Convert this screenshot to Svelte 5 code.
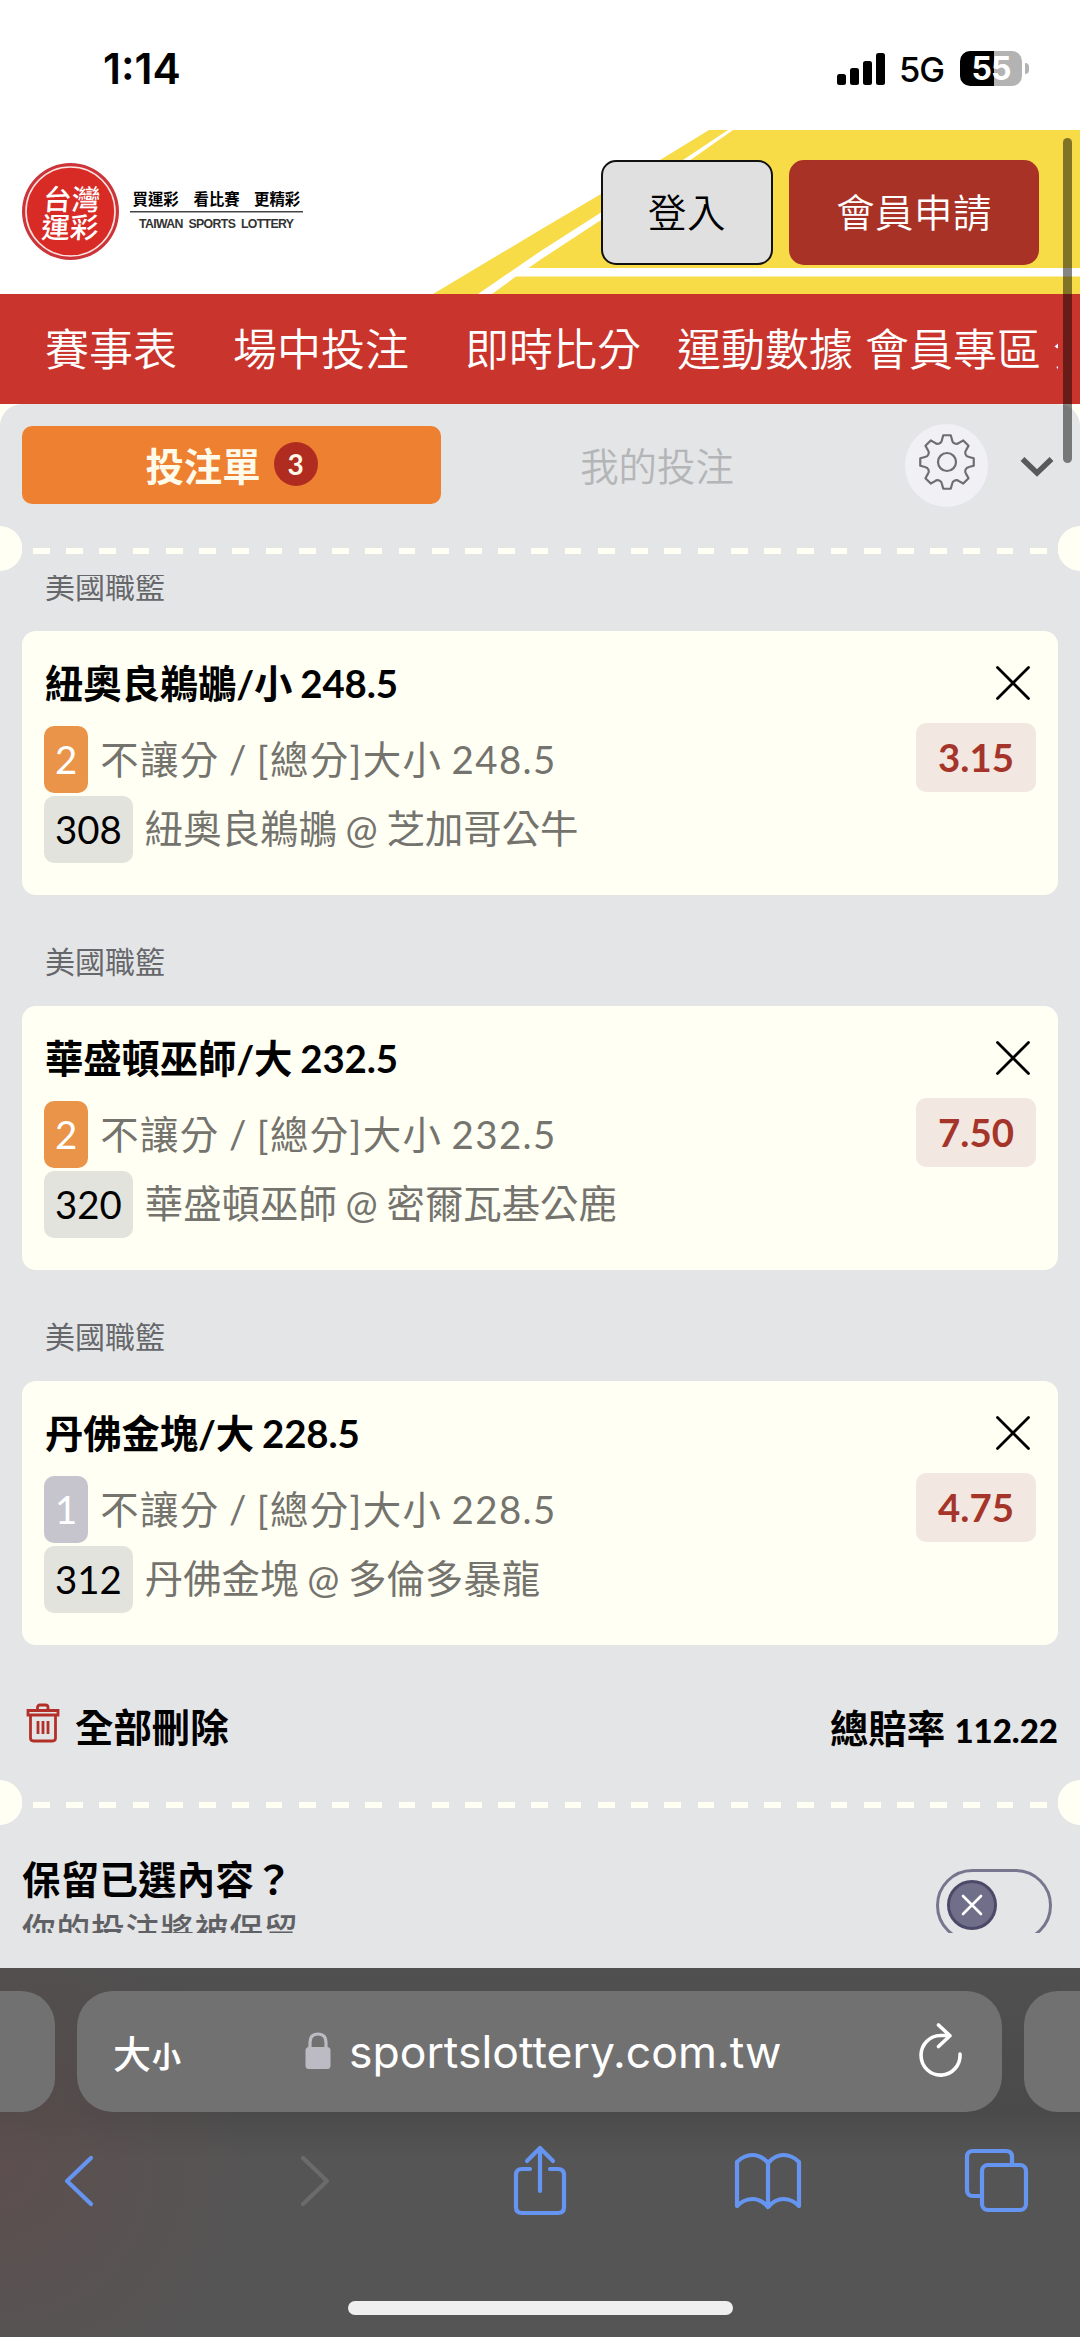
<script>
  const navItems = ['賽事表', '場中投注', '即時比分', '運動數據', '會員專區', '分析'];

  let bets = [
    { id: 308, league: '美國職籃', pick: '紐奧良鵜鶘/小 248.5', legs: 2, market: '不讓分 / [總分]大小 248.5', match: '紐奧良鵜鶘 @ 芝加哥公牛', odds: '3.15' },
    { id: 320, league: '美國職籃', pick: '華盛頓巫師/大 232.5', legs: 2, market: '不讓分 / [總分]大小 232.5', match: '華盛頓巫師 @ 密爾瓦基公鹿', odds: '7.50' },
    { id: 312, league: '美國職籃', pick: '丹佛金塊/大 228.5', legs: 1, market: '不讓分 / [總分]大小 228.5', match: '丹佛金塊 @ 多倫多暴龍', odds: '4.75' }
  ];

  function polar(r, deg) {
    const t = (deg * Math.PI) / 180;
    return `${(r * Math.cos(t)).toFixed(2)} ${(r * Math.sin(t)).toFixed(2)}`;
  }

  // Eight-tooth cog outline around 0,0
  function gearPath() {
    let d = `M${polar(27, -8)}`;
    for (let a = 0; a < 360; a += 45) {
      d += `L${polar(27, a + 8)}L${polar(22.5, a + 13)}`;
      d += `C${polar(19.5, a + 16)} ${polar(19.5, a + 29)} ${polar(22.5, a + 32)}L${polar(27, a + 37)}`;
    }
    return d + 'Z';
  }

  function removeBet(id) {
    bets = bets.filter(b => b.id !== id);
  }
</script>

<div class="screen">
  <div class="status">
    <span class="time">1:14</span>
    <div class="status-right">
      <svg width="48" height="32" viewBox="0 0 48 32">
        <rect x="0" y="21" width="9" height="11" rx="2.5" />
        <rect x="13" y="15" width="9" height="17" rx="2.5" />
        <rect x="26" y="8" width="9" height="24" rx="2.5" />
        <rect x="39" y="0" width="9" height="32" rx="2.5" />
      </svg>
      <span class="network">5G</span>
      <div class="battery">55</div>
      <div class="battery-tip"></div>
    </div>
  </div>

  <header class="header">
    <svg class="court" width="660" height="164" viewBox="420 130 660 164">
      <path d="M433 294L540 230L601 194L660 160L709 130H1080V294Z" fill="#f7dc48" />
      <path d="M478 294L540 251.5L601 212.5L683 160L728 130H733L690.5 160L601 220L540 260L528.5 268H1080V276.5H516L492 294Z" fill="#fff" />
    </svg>
    <svg class="logo" width="290" height="100" viewBox="20 161 290 100">
      <circle cx="70.5" cy="211.5" r="48.5" fill="#cc3439" />
      <circle cx="70.5" cy="211.5" r="44.5" fill="#d92b26" stroke="#fbe3df" stroke-width="1.6" />
      <g class="seal" transform="translate(70.5 211.5) skewX(-4)">
        <text x="-28" y="-1.5">台</text>
        <text x="0.5" y="-1.5">灣</text>
        <text x="-28" y="26.5">運</text>
        <text x="0.5" y="26.5">彩</text>
      </g>
      <g class="slogan">
        <text x="132.5" y="205">買運彩</text>
        <text x="193.5" y="205">看比賽</text>
        <text x="254" y="205">更精彩</text>
      </g>
      <path d="M130 211.8H303" stroke="#444" stroke-width="1.4" />
      <text class="english" x="139" y="227.5" textLength="155">TAIWAN SPORTS LOTTERY</text>
    </svg>
    <button class="btn login">登入</button>
    <button class="btn join">會員申請</button>
  </header>

  <nav class="nav">
    <div class="nav-list">
      {#each navItems as item}
        <span class="nav-item">{item}</span>
      {/each}
    </div>
  </nav>

  <main class="slip">
    <div class="slip-top">
      <div class="tabs">
        <button class="tab active">投注單 <span class="count">3</span></button>
        <button class="tab">我的投注</button>
        <button class="gear" aria-label="settings">
          <svg width="60" height="60" viewBox="-30 -30 60 60">
            <path d={gearPath()} />
            <circle r="9" />
          </svg>
        </button>
        <svg class="chevron" width="36" height="24" viewBox="0 0 36 24">
          <path d="M3.5 5L18 19L32.5 5" />
        </svg>
      </div>
      <div class="perforation"></div>
    </div>

    <div class="slip-body">
      {#each bets as bet (bet.id)}
        <section class="bet">
          <div class="league">{bet.league}</div>
          <div class="card">
            <div class="row title">
              <span>{bet.pick}</span>
              <button class="close" aria-label="remove" on:click={() => removeBet(bet.id)}>
                <svg width="36" height="36" viewBox="0 0 36 36">
                  <path d="M2.5 2.5L33.5 33.5M33.5 2.5L2.5 33.5" />
                </svg>
              </button>
            </div>
            <div class="row market">
              <span class="badge legs" class:single={bet.legs === 1}>{bet.legs}</span>
              <span class="market-name">{bet.market}</span>
              <span class="odds">{bet.odds}</span>
            </div>
            <div class="row match">
              <span class="badge code">{bet.id}</span>
              <span class="match-name">{bet.match}</span>
            </div>
          </div>
        </section>
      {/each}

      <div class="totals">
        <svg width="34" height="40" viewBox="0 0 34 40">
          <path d="M11.5 7V4.5Q11.5 2 14 2H19.5Q22 2 22 4.5V7M2 7.5H32V12H2ZM4.5 12V35Q4.5 38 7.5 38H26.5Q29.5 38 29.5 35V12M12 18V31M17 18V31M22 18V31" />
        </svg>
        <span class="clear">全部刪除</span>
        <span class="total">總賠率 <b>112.22</b></span>
      </div>

      <div class="perforation"></div>

      <div class="keep">
        <div>
          <div class="keep-title">保留已選內容？</div>
          <div class="keep-note">你的投注將被保留</div>
        </div>
        <div class="toggle">
          <div class="knob">
            <svg width="22" height="22" viewBox="0 0 22 22"><path d="M2 2L20 20M20 2L2 20" /></svg>
          </div>
        </div>
      </div>
    </div>
  </main>

  <footer class="browser">
    <div class="address-row">
      <div class="pill edge-left"></div>
      <div class="pill address">
        <span class="text-size">大<small>小</small></span>
        <svg class="lock" width="26" height="38" viewBox="0 0 26 38">
          <rect x="0.5" y="15" width="25" height="22" rx="3.5" fill="#bcbbc3" />
          <path d="M5 17V10.5Q5 2 13 2T21 10.5V17" fill="none" stroke="#bcbbc3" stroke-width="3.2" />
        </svg>
        <span class="url">sportslottery.com.tw</span>
        <svg class="reload" width="46" height="56" viewBox="0 0 46 56">
          <path d="M42 32A19.5 19.8 0 1 1 22.5 13.500H31M20.500 3L32 13.800L20.500 24.500" />
        </svg>
      </div>
      <div class="pill edge-right"></div>
    </div>
    <div class="toolbar">
      <svg width="34" height="56" viewBox="0 0 34 56"><path d="M29 5L5 28L29 51" /></svg>
      <svg class="disabled" width="34" height="56" viewBox="0 0 34 56"><path d="M5 5L29 28L5 51" /></svg>
      <svg width="56" height="72" viewBox="0 0 56 72">
        <path d="M18 24H10Q4 24 4 30V62Q4 68 10 68H46Q52 68 52 62V30Q52 24 46 24H38M28 46V4M15 16L28 3L41 16" />
      </svg>
      <svg width="68" height="58" viewBox="0 0 68 58">
        <path d="M34 11Q27 3 18.5 3Q10 3 3 10V54Q10 47 18.5 47Q27 47 34 55Q41 47 49.5 47Q58 47 65 54V10Q58 3 49.5 3Q41 3 34 11V55" />
      </svg>
      <svg width="66" height="66" viewBox="0 0 66 66">
        <path d="M17 48H9Q3 48 3 42V9Q3 3 9 3H42Q48 3 48 9V16" />
        <rect x="18" y="17" width="44" height="45" rx="6" />
      </svg>
    </div>
    <div class="home-bar"></div>
  </footer>

  <div class="scrollbar"></div>
</div>

<style>
  :global(body) {
    margin: 0;
    background: #fff;
  }

  .screen {
    position: relative;
    width: 1080px;
    height: 2337px;
    overflow: hidden;
    font-family: Lato, "Noto Sans CJK TC", sans-serif;
    font-size: 38.4px;
    color: #000;
  }

  button {
    border: none;
    padding: 0;
    margin: 0;
    background: none;
    font: inherit;
    color: inherit;
  }

  svg {
    display: block;
    flex: none;
  }

  /* Status bar */
  .status {
    display: flex;
    justify-content: space-between;
    height: 130px;
    box-sizing: border-box;
    padding: 44px 51px 0 103px;
    font-family: Inter, sans-serif;
  }

  .time {
    font-size: 42.5px;
    font-weight: 600;
    line-height: 50px;
  }

  .status-right {
    display: flex;
    align-items: center;
    height: 49px;
  }

  .network {
    width: 61px;
    padding: 2px 0 0 14px;
    box-sizing: border-box;
    margin-right: 14px;
    font-size: 34.5px;
    font-weight: 500;
    letter-spacing: -1px;
    line-height: 49px;
  }

  .battery {
    width: 62px;
    height: 35px;
    border-radius: 10px;
    background: linear-gradient(90deg, #000 34px, #b3b3b3 34px);
    color: #fff;
    font-size: 32px;
    font-weight: 700;
    line-height: 35px;
    text-align: center;
    letter-spacing: -1px;
  }

  .battery-tip {
    width: 4px;
    height: 11px;
    margin-left: 3px;
    border-radius: 0 4px 4px 0;
    background: #b3b3b3;
  }

  /* Header */
  .header {
    position: relative;
    display: flex;
    height: 164px;
    box-sizing: border-box;
    padding: 30px 41px 0 20px;
  }

  .court {
    position: absolute;
    right: 0;
    top: 0;
  }

  .logo {
    position: relative;
    margin: 1px auto 0 0;
  }

  .seal {
    font-size: 28.5px;
    font-weight: 500;
    fill: #fff;
  }

  .slogan {
    font-size: 15.4px;
    font-weight: 700;
  }

  .english {
    font-family: "Liberation Sans", sans-serif;
    font-size: 12.3px;
    font-weight: 700;
    fill: #333;
    word-spacing: 3px;
  }

  .btn {
    position: relative;
    box-sizing: border-box;
    height: 105px;
    border-radius: 15px;
    line-height: 101px;
    font-weight: 350;
    letter-spacing: 0.5px;
  }

  .login {
    width: 172px;
    margin-right: 16px;
    border: 2px solid #111;
    background: #e0e0e0;
  }

  .join {
    width: 250px;
    background: #a93226;
    color: #fff;
  }

  .nav {
    height: 110px;
    box-sizing: border-box;
    padding: 0 22px 0 45px;
    background: #c9352c;
    color: #fff;
  }

  .nav-list {
    display: flex;
    overflow: hidden;
    line-height: 110px;
    font-size: 44px;
    font-weight: 350;
    white-space: nowrap;
  }

  .nav-item {
    flex: none;
    margin-right: 12px;
  }

  .nav-item:nth-child(1),
  .nav-item:nth-child(2) {
    margin-right: 56px;
  }

  .nav-item:nth-child(3) {
    margin-right: 36px;
  }

  /* Bet slip */
  .slip {
    height: 1564px;
    background: linear-gradient(#fffff4 60px, #e4e5e7 60px);
  }

  .slip-top {
    height: 171px;
    box-sizing: border-box;
    padding-top: 19px;
    border-radius: 22px 22px 0 0;
    background: #e4e5e7;
  }

  .tabs {
    display: flex;
    align-items: center;
    height: 84px;
    padding: 0 24px 0 22px;
  }

  .tab {
    display: flex;
    align-items: center;
    justify-content: center;
    width: 432px;
    height: 78px;
    padding-bottom: 2px;
    box-sizing: border-box;
    color: #b4b5b7;
    font-weight: 350;
  }

  .tab.active {
    width: 419px;
    border-radius: 10px;
    background: #ee8031;
    color: #fffbea;
    font-weight: 700;
  }

  .count {
    width: 44px;
    height: 44px;
    margin-left: 13px;
    border-radius: 50%;
    background: #b12c20;
    font-size: 28px;
    line-height: 44px;
  }

  .gear {
    display: flex;
    align-items: center;
    justify-content: center;
    width: 83px;
    height: 83px;
    margin-left: 32px;
    padding-bottom: 6px;
    box-sizing: border-box;
    border-radius: 50%;
    background: #f1f1f5;
  }

  .gear svg {
    fill: none;
    stroke: #6d6e71;
    stroke-width: 2.2;
    stroke-linejoin: round;
  }

  .chevron {
    margin-left: 31px;
    margin-top: 2px;
    fill: none;
    stroke: #58595b;
    stroke-width: 5.5;
  }

  .perforation {
    height: 45px;
    margin-top: 19px;
    background:
      radial-gradient(circle at 0 50%, #fffff4 22px, transparent 22.6px),
      radial-gradient(circle at 100% 50%, #fffff4 22px, transparent 22.6px),
      repeating-linear-gradient(90deg, #fffff4 0 16.8px, transparent 16.8px 33.23px) 33px 22px / 1014px 6px no-repeat;
  }

  .slip-body {
    height: 1358px;
    overflow: hidden;
    background: #e4e5e7;
  }

  .bet:first-child {
    margin-top: -55px;
  }

  .league {
    height: 111px;
    box-sizing: border-box;
    padding: 44px 44px 0 45px;
    font-size: 30px;
    line-height: 44px;
    color: #66676a;
  }

  .card {
    height: 264px;
    box-sizing: border-box;
    margin: 0 22px;
    padding: 17px 22px 0;
    border-radius: 14px;
    background: #fffff4;
  }

  .row {
    display: flex;
    align-items: center;
    height: 70px;
    white-space: pre;
  }

  .title {
    font-weight: 700;
    justify-content: space-between;
    word-spacing: -1px;
    letter-spacing: -0.15px;
  }

  .title span {
    padding: 0 0 5px 1px;
  }

  .close {
    margin-right: 5px;
  }

  .close svg {
    fill: none;
    stroke: #000;
    stroke-width: 2.8;
    stroke-linecap: round;
  }

  .market,
  .match {
    color: #74736d;
    font-weight: 400;
  }

  .badge {
    box-sizing: border-box;
    height: 67px;
    padding: 0 11px;
    margin-right: 12px;
    border-radius: 10px;
    line-height: 67px;
  }

  .legs {
    background: #ea9449;
    color: #fff;
  }

  .single {
    background: #c6c5ce;
  }

  .code {
    background: #e3e3de;
    color: #000;
  }

  .market {
    height: 72px;
    margin-top: 5px;
  }

  .match {
    height: 66px;
    margin-top: 1px;
  }

  .market-name {
    padding-bottom: 5px;
    letter-spacing: 1.4px;
    word-spacing: -2px;
  }

  .match-name {
    padding-bottom: 6px;
    word-spacing: -1px;
  }

  .odds {
    width: 120px;
    height: 69px;
    margin: 0 0 4px auto;
    border-radius: 10px;
    background: #f3e7e1;
    color: #a5352a;
    font-weight: 700;
    line-height: 69px;
    text-align: center;
  }

  .totals {
    display: flex;
    align-items: center;
    height: 116px;
    padding: 14px 22px 0 26px;
    box-sizing: border-box;
    margin-top: 15px;
    font-weight: 700;
  }

  .totals svg {
    fill: none;
    stroke: #b3302a;
    stroke-width: 2.8;
    margin-right: 15px;
    margin-bottom: 4px;
  }

  .total {
    margin-left: auto;
    padding-top: 2px;
  }

  .total b {
    font-size: 33px;
  }

  .totals + .perforation {
    margin-top: 4px;
  }

  .keep {
    display: flex;
    justify-content: space-between;
    padding: 25px 28px 0 22px;
  }

  .keep-title {
    font-weight: 700;
    line-height: 58px;
    letter-spacing: 0.3px;
  }

  .keep-note {
    font-size: 33.6px;
    letter-spacing: 1px;
    line-height: 45px;
    color: #606164;
    font-weight: 500;
  }

  .toggle {
    box-sizing: border-box;
    width: 116px;
    height: 73px;
    margin-top: 19px;
    padding: 8px;
    border: 3px solid #77768e;
    border-radius: 37px;
  }

  .knob {
    display: flex;
    align-items: center;
    justify-content: center;
    box-sizing: border-box;
    width: 50px;
    height: 50px;
    border: 3px solid #4c4a69;
    border-radius: 50%;
    background: #706f89;
  }

  .knob svg {
    stroke: #fff;
    stroke-width: 2.6;
    stroke-linecap: round;
  }

  /* Safari chrome */
  .browser {
    height: 369px;
    background:
      radial-gradient(circle at 0 200px, rgba(96, 76, 76, 0.7), transparent 260px),
      linear-gradient(#505050, #4a4a4a 145px, #555 190px);
  }

  .address-row {
    display: flex;
    justify-content: space-between;
    padding-top: 23px;
  }

  .pill {
    height: 121px;
    background: #727171;
  }

  .edge-left {
    width: 55px;
    border-radius: 0 34px 34px 0;
  }

  .edge-right {
    width: 56px;
    border-radius: 34px 0 0 34px;
  }

  .address {
    display: flex;
    align-items: center;
    width: 925px;
    box-sizing: border-box;
    padding: 0 38px 0 36px;
    border-radius: 36px;
    color: #fff;
    font-family: Inter, "Noto Sans CJK TC", sans-serif;
  }

  .text-size {
    width: 192px;
    font-size: 38px;
    font-weight: 500;
  }

  .text-size small {
    font-size: 29px;
    font-weight: 700;
    margin-left: 1px;
  }

  .lock {
    margin-bottom: 1px;
  }

  .url {
    margin-left: 18px;
    font-size: 44.5px;
  }

  .reload {
    margin-left: auto;
    margin-bottom: 4px;
    fill: none;
    stroke: #fff;
    stroke-width: 3.6;
    stroke-linecap: round;
    stroke-linejoin: round;
  }

  .toolbar {
    display: grid;
    grid-template-columns: 236px 214px 222px 230px 66px;
    align-items: center;
    height: 72px;
    margin-top: 33px;
    padding-left: 62px;
  }

  .toolbar svg {
    fill: none;
    stroke: #6595f0;
    stroke-width: 4.2;
    stroke-linecap: round;
    stroke-linejoin: round;
  }

  .toolbar .disabled {
    stroke: #6b6b6b;
  }

  .home-bar {
    width: 385px;
    height: 14px;
    margin: 84px auto 0;
    border-radius: 7px;
    background: #efefef;
  }

  .scrollbar {
    position: absolute;
    top: 138px;
    right: 8px;
    width: 9px;
    height: 325px;
    border-radius: 5px;
    background: rgba(0, 0, 0, 0.48);
  }
</style>
